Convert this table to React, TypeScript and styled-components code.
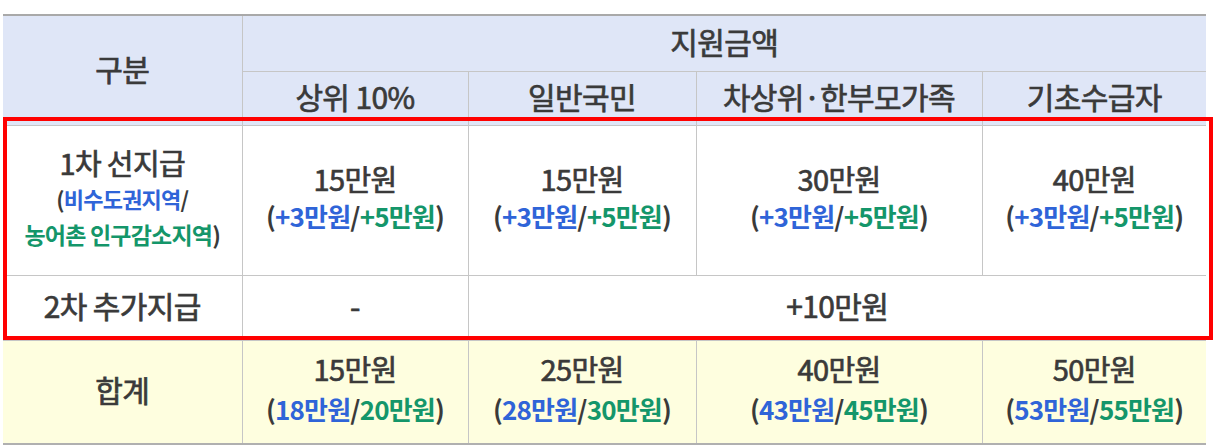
import React from "react";
import styled, { createGlobalStyle } from "styled-components";

const textColor = "#3a3a3a";
const blue = "#2f64d8";
const green = "#14966a";
const line = "#c6c6c6";

const GlobalStyle = createGlobalStyle`
  body {
    margin: 0;
    background: #fff;
    font-family: "Noto Sans CJK KR", "Noto Sans", sans-serif;
    color: ${textColor};
  }
`;

const Wrap = styled.div`
  position: relative;
  padding: 14px 0 0 3px;
  width: 1227px;
`;

const Table = styled.table`
  width: 1203px;
  border-collapse: collapse;
  table-layout: fixed;
  border-top: 2px solid #a9a9a9;
  border-bottom: 2px solid #b0b0b0;
  letter-spacing: -0.6px;
`;

/* medium weight: regular face thickened a little.
   glyphs sit low in the line box, so lift them with bottom padding */
const Cell = styled.td<{ $bg?: string; $h?: number }>`
  background: ${(p) => p.$bg || "#fff"};
  height: ${(p) => (p.$h ? `${p.$h - 5}px` : "auto")};
  border: 1px solid ${line};
  padding: 0 0 5px;
  text-align: center;
  vertical-align: middle;
  font-size: 30px;
  font-weight: 400;
  -webkit-text-stroke: 0.7px ${textColor};
  line-height: 1.3;
  &:first-child {
    border-left: none;
  }
  &:last-child {
    border-right: none;
  }
`;

const Main = styled.div<{ $lh?: number }>`
  font-size: 29px;
  line-height: ${(p) => p.$lh || 36}px;
`;

const Sub = styled.div<{ $size?: number; $lh?: number }>`
  font-size: ${(p) => p.$size || 26}px;
  font-weight: 700;
  -webkit-text-stroke: 0;
  line-height: ${(p) => p.$lh || 40}px;
  letter-spacing: -0.8px;
`;

const Blue = styled.span`
  color: ${blue};
`;

const Green = styled.span`
  color: ${green};
`;

const Highlight = styled.div`
  position: absolute;
  left: 3px;
  top: 117px;
  width: 1210px;
  height: 223px;
  box-sizing: border-box;
  border: 4px solid #ff0000;
  pointer-events: none;
`;

const headBg = "#dfe6f7";
const sumBg = "#fefedf";

const plus = (
  <Sub>
    (<Blue>+3만원</Blue>/<Green>+5만원</Green>)
  </Sub>
);

const totals = [
  ["15만원", "18만원", "20만원"],
  ["25만원", "28만원", "30만원"],
  ["40만원", "43만원", "45만원"],
  ["50만원", "53만원", "55만원"],
];

const App: React.FC = () => (
  <Wrap>
    <GlobalStyle />
    <Table>
      <colgroup>
        <col style={{ width: 239 }} />
        <col style={{ width: 226 }} />
        <col style={{ width: 228 }} />
        <col style={{ width: 286 }} />
        <col style={{ width: 224 }} />
      </colgroup>
      <tbody>
        <tr>
          <Cell $bg={headBg} rowSpan={2}>구분</Cell>
          <Cell $bg={headBg} $h={55} colSpan={4}>지원금액</Cell>
        </tr>
        <tr>
          <Cell $bg={headBg} $h={53}>상위 10%</Cell>
          <Cell $bg={headBg}>일반국민</Cell>
          <Cell $bg={headBg}>차상위·한부모가족</Cell>
          <Cell $bg={headBg}>기초수급자</Cell>
        </tr>
        <tr>
          <Cell $h={149}>
            <Main>1차 선지급</Main>
            <Sub $size={22} $lh={36}>
              (<Blue>비수도권지역</Blue>/
            </Sub>
            <Sub $size={23} $lh={36}>
              <Green>농어촌 인구감소지역</Green>)
            </Sub>
          </Cell>
          {["15만원", "15만원", "30만원", "40만원"].map((v, i) => (
            <Cell key={i}>
              <Main>{v}</Main>
              {plus}
            </Cell>
          ))}
        </tr>
        <tr>
          <Cell $h={64}>2차 추가지급</Cell>
          <Cell>-</Cell>
          <Cell colSpan={3}>+10만원</Cell>
        </tr>
        <tr>
          <Cell $bg={sumBg} $h={102}>합계</Cell>
          {totals.map(([t, a, b]) => (
            <Cell key={t} $bg={sumBg}>
              <Main $lh={38}>{t}</Main>
              <Sub $lh={44}>
                (<Blue>{a}</Blue>/<Green>{b}</Green>)
              </Sub>
            </Cell>
          ))}
        </tr>
      </tbody>
    </Table>
    <Highlight />
  </Wrap>
);

export default App;
